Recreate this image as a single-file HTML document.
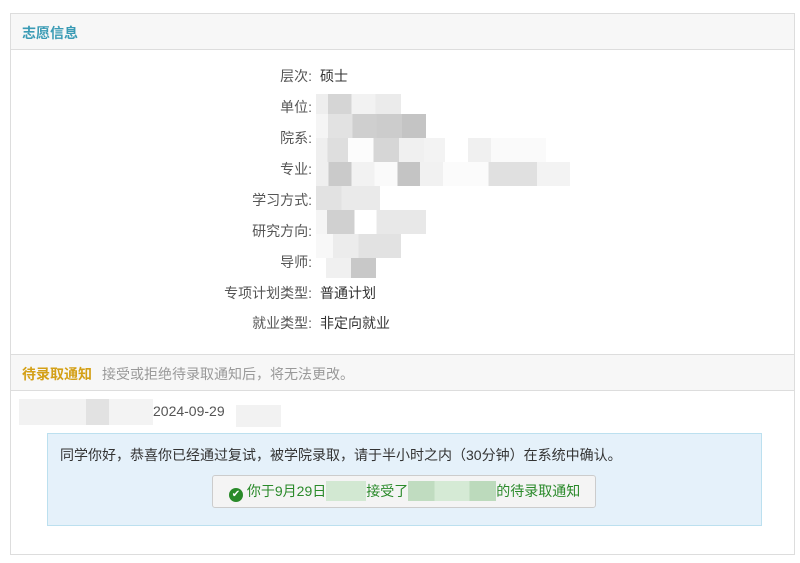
<!DOCTYPE html><html><head><meta charset="utf-8"><style>
body{margin:0;background:#fff;font-family:"Liberation Sans","Noto Sans CJK SC",sans-serif;font-size:14px;color:#333}
.box{position:absolute;left:10px;top:13px;width:785px;height:542px;border:1px solid #ddd;box-sizing:border-box}
.hd{position:absolute;left:0;right:0;height:36px;background:#f7f7f7;border-bottom:1px solid #ddd;box-sizing:border-box}
.row{position:absolute;left:0;width:301px;text-align:right;color:#555}
.val{position:absolute;left:309px;color:#333}
.p{position:absolute;height:20px}
</style></head><body>
<div class="box">
<div class="hd" style="top:0"><span style="position:absolute;left:11px;top:9px;color:#3a9bb5;font-weight:bold;font-size:14px">志愿信息</span></div>
<div class="row" style="top:52px">层次:</div><div class="val" style="top:52px">硕士</div>
<div class="row" style="top:83px">单位:</div>
<div class="row" style="top:114px">院系:</div>
<div class="row" style="top:145px">专业:</div>
<div class="row" style="top:176px">学习方式:</div>
<div class="row" style="top:207px">研究方向:</div>
<div class="row" style="top:238px">导师:</div>
<div class="row" style="top:269px">专项计划类型:</div><div class="val" style="top:269px">普通计划</div>
<div class="row" style="top:299px">就业类型:</div><div class="val" style="top:299px">非定向就业</div>
<div class="p" style="left:305px;top:80px;width:85px;background:linear-gradient(90deg,#eee 0 14%,#d5d5d5 14% 42%,#f2f2f2 42% 70%,#ebebeb 70%)"></div>
<div class="p" style="left:305px;top:100px;width:110px;height:24px;background:linear-gradient(90deg,#f5f5f5 0 11%,#e2e2e2 11% 33%,#cfcfcf 33% 55%,#ccc 55% 78%,#c4c4c4 78%)"></div>
<div class="p" style="left:305px;top:124px;width:230px;height:24px;background:linear-gradient(90deg,#efefef 0 5%,#dedede 5% 14%,#fcfcfc 14% 25%,#d6d6d6 25% 36%,#f0f0f0 36% 47%,#f3f3f3 47% 56%,#fff 56% 66%,#f0f0f0 66% 76%,#fafafa 76%)"></div>
<div class="p" style="left:305px;top:148px;width:254px;height:24px;background:linear-gradient(90deg,#efefef 0 5%,#cacaca 5% 14%,#f2f2f2 14% 23%,#fafafa 23% 32%,#c4c4c4 32% 41%,#f1f1f1 41% 50%,#fbfbfb 50% 68%,#e0e0e0 68% 87%,#f3f3f3 87%)"></div>
<div class="p" style="left:305px;top:172px;width:64px;height:24px;background:linear-gradient(90deg,#e2e2e2 0 40%,#eaeaea 40%)"></div>
<div class="p" style="left:305px;top:196px;width:110px;height:24px;background:linear-gradient(90deg,#f5f5f5 0 10%,#d0d0d0 10% 35%,#fff 35% 55%,#e8e8e8 55%)"></div>
<div class="p" style="left:305px;top:220px;width:85px;height:24px;background:linear-gradient(90deg,#f8f8f8 0 20%,#ececec 20% 50%,#e2e2e2 50%)"></div>
<div class="p" style="left:315px;top:244px;width:50px;height:20px;background:linear-gradient(90deg,#f0f0f0 0 50%,#c8c8c8 50%)"></div>
<div class="hd" style="top:340px;height:37px;border-top:1px solid #ddd"><span style="position:absolute;left:11px;top:9px;color:#d4a017;font-weight:bold">待录取通知</span><span style="position:absolute;left:91px;top:9px;color:#999">接受或拒绝待录取通知后，将无法更改。</span></div>
<div class="p" style="left:8px;top:385px;width:134px;height:26px;background:linear-gradient(90deg,#f2f2f2 0 50%,#e2e2e2 50% 67%,#f3f3f3 67%)"></div>
<div style="position:absolute;left:142px;top:389px;color:#555">2024-09-29</div>
<div class="p" style="left:225px;top:391px;width:45px;height:22px;background:#f2f2f2"></div>
<div style="position:absolute;left:36px;top:419px;width:715px;height:93px;background:#e5f1fa;border:1px solid #bce0ef;box-sizing:border-box">
<div style="position:absolute;left:12px;top:11px;color:#333">同学你好，恭喜你已经通过复试，被学院录取，请于半小时之内（30分钟）在系统中确认。</div>
<div style="position:absolute;left:164px;top:41px;width:384px;height:33px;background:#f4f4f4;border:1px solid #ccc;border-radius:3px;box-sizing:border-box;color:#2a8a2a;line-height:30px;padding-left:16px;white-space:nowrap">
<span style="display:inline-block;width:14px;height:14px;border-radius:50%;background:#2a8a2a;color:#fff;font-size:10px;line-height:14px;text-align:center;vertical-align:-1px">✔</span> 你于9月29日<span style="display:inline-block;width:40px;height:20px;background:#d2e8d2;vertical-align:-5px"></span>接受了<span style="display:inline-block;width:88px;height:20px;background:linear-gradient(90deg,#c0dcc0 0 30%,#d5ead5 30% 70%,#bcdabc 70%);vertical-align:-5px"></span>的待录取通知</div>
</div>
</div>
</body></html>
